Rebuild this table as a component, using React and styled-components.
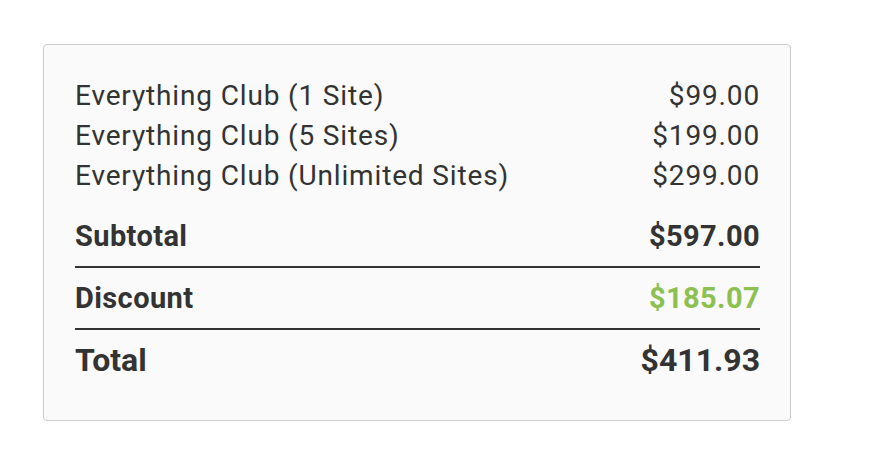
import React from 'react'
import styled, { createGlobalStyle } from 'styled-components'

const GlobalStyle = createGlobalStyle`
  body {
    margin: 0;
    background: #ffffff;
    font-family: Roboto, "Liberation Sans", sans-serif;
    color: #333333;
  }
`

const Page = styled.div`
  padding: 44px 0 0 43px;
`

const Card = styled.div`
  box-sizing: content-box;
  width: 685px;
  padding: 31px 30px 30px 31px;
  background-color: #fafafa;
  border: 1px solid #cccccc;
  border-radius: 4px;
`

const Items = styled.div`
  display: flex;
  flex-direction: column;
`

const Item = styled.div`
  display: flex;
  justify-content: space-between;
  font-size: 28px;
  line-height: 40px;
  font-weight: 400;
  letter-spacing: 0.85px;
`

const Summary = styled.div`
  margin-top: 10px;
`

const SummaryRow = styled.div`
  display: flex;
  justify-content: space-between;
  padding: 10px 0;
  font-size: ${p => (p.$big ? '32px' : '29px')};
  letter-spacing: ${p => (p.$big ? '0' : '0.4px')};
  line-height: 40px;
  font-weight: 700;
  border-bottom: ${p => (p.$last ? 'none' : '2px solid #333333')};
`

const Amount = styled.span`
  color: ${p => (p.$green ? '#8cc152' : 'inherit')};
`

const items = [
  ['Everything Club (1 Site)', '$99.00'],
  ['Everything Club (5 Sites)', '$199.00'],
  ['Everything Club (Unlimited Sites)', '$299.00'],
]

const App = () => {
  return (
    <>
      <GlobalStyle />
      <Page>
        <Card>
          <Items>
            {items.map(([name, price]) => (
              <Item key={name}>
                <span>{name}</span>
                <span>{price}</span>
              </Item>
            ))}
          </Items>
          <Summary>
            <SummaryRow>
              <span>Subtotal</span>
              <Amount>$597.00</Amount>
            </SummaryRow>
            <SummaryRow>
              <span>Discount</span>
              <Amount $green>$185.07</Amount>
            </SummaryRow>
            <SummaryRow $big $last>
              <span>Total</span>
              <Amount>$411.93</Amount>
            </SummaryRow>
          </Summary>
        </Card>
      </Page>
    </>
  )
}

export default App
